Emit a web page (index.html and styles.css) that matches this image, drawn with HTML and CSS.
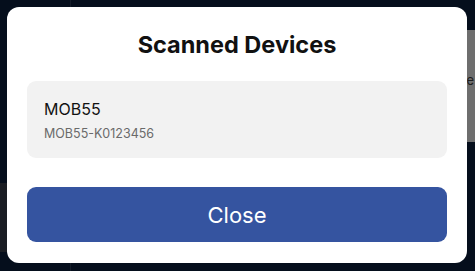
FILE: index.html
```html
<!DOCTYPE html>
<html lang="en">
<head>
    <meta charset="UTF-8">
    <meta name="viewport" content="width=device-width, initial-scale=1.0">
    <title>Scanned Devices</title>
    <link rel="stylesheet" href="styles.css">
</head>
<body>
    <div class="app">
        <div class="sidebar">
            <div class="side-item"></div>
        </div>
        <div class="main">
            <div class="panel">
                <span class="panel-text">e</span>
            </div>
        </div>
    </div>

    <div class="modal">
        <div class="modal-content">
            <h2>Scanned Devices</h2>
            <div class="device">
                <div class="device-name">MOB55</div>
                <div class="device-id">MOB55-K0123456</div>
            </div>
            <button class="close-btn">Close</button>
        </div>
    </div>
</body>
</html>
```

FILE: styles.css
```css
body {
    margin: 0;
    font-family: Inter, "Open Sans", sans-serif;
    background-color: #050e1c;
    height: 271px;
    overflow: hidden;
}
.app {
    display: flex;
    height: 100%;
}
.sidebar {
    width: 70px;
    border-right: 1px solid #141c29;
    display: flex;
    flex-direction: column;
    padding-top: 183px;
}
.side-item {
    height: 69px;
    background-color: #1a1d23;
}
.main {
    flex: 1;
    padding: 30px 0 0 70px;
}
.panel {
    height: 112px;
    background-color: #6e6e6e;
    display: flex;
    align-items: center;
    justify-content: flex-end;
    padding-right: 1px;
}
.panel-text {
    color: #1c1c1c;
    font-size: 13px;
    margin-top: -12px;
}
.modal {
    position: fixed;
    left: 7px;
    top: 7px;
    width: 460px;
    height: 256px;
}
.modal-content {
    box-sizing: border-box;
    height: 100%;
    background-color: #ffffff;
    border-radius: 12px;
    padding: 22px 20px 21px 20px;
    display: flex;
    flex-direction: column;
}
.modal-content h2 {
    margin: 0 0 20px 0;
    text-align: center;
    font-size: 23.5px;
    font-weight: 700;
    color: #111111;
    line-height: 32px;
}
.device {
    background-color: #f2f2f2;
    border-radius: 9px;
    padding: 17px 17px 16px 17px;
}
.device-name {
    font-size: 16px;
    font-weight: 400;
    color: #111111;
    line-height: 22px;
}
.device-id {
    font-size: 12.5px;
    color: #6a6a6a;
    margin-top: 5px;
    line-height: 17px;
}
.close-btn {
    margin-top: auto;
    height: 55px;
    border: none;
    border-radius: 9px;
    background-color: #3554a0;
    color: #ffffff;
    font-family: inherit;
    font-size: 22px;
    font-weight: 400;
    padding-top: 2px;
    cursor: pointer;
}
```
